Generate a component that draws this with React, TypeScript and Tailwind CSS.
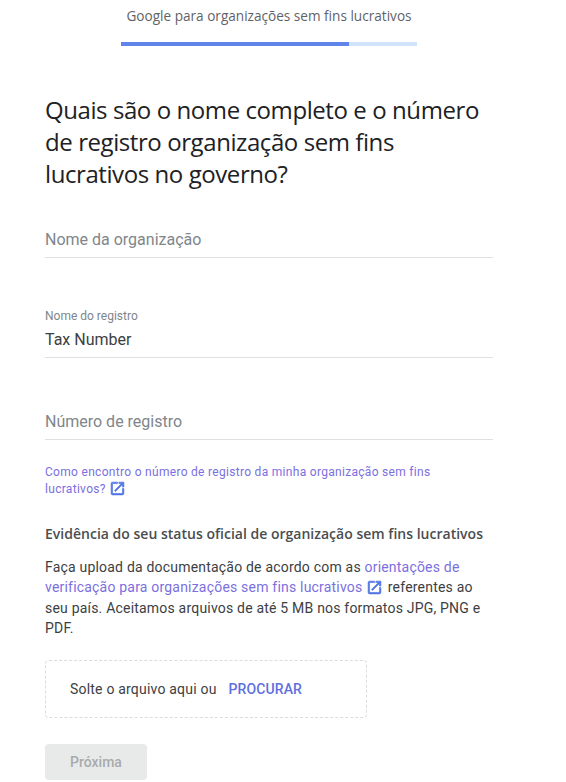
const ExternalIcon = ({ className }: { className: string }) => (
  <svg viewBox="0 0 24 24" fill="currentColor" stroke="currentColor" strokeWidth="0.9" className={className}>
    <path d="M19 19H5V5h7V3H5a2 2 0 0 0-2 2v14a2 2 0 0 0 2 2h14a2 2 0 0 0 2-2v-7h-2v7zM14 3v2h3.59l-9.83 9.83 1.41 1.41L19 6.41V10h2V3h-7z" />
  </svg>
);

function Field({ label, value }: { label: string; value?: string }) {
  return (
    <div className="h-[50px] border-b border-[#e0e0e0] flex flex-col justify-end pb-[7px]">
      {value ? (
        <>
          <span className="text-[12px] leading-[16px] text-[#80868b]">{label}</span>
          <span className="text-[16px] leading-[20px] mt-[6px] text-[#3c4043]">{value}</span>
        </>
      ) : (
        <span className="text-[16px] leading-[20px] text-[#80868b]">{label}</span>
      )}
    </div>
  );
}

export default function App() {
  return (
    <div className="w-[566px] h-[782px] overflow-hidden bg-white font-['Roboto',sans-serif]">
      <div className="w-[538px] flex flex-col items-center pt-[6px]">
        <p className="font-['Open_Sans',sans-serif] text-[13.6px] leading-[20px] text-[#5f6368]">Google para organizações sem fins lucrativos</p>
        <div className="mt-[16px] w-[296px] h-[4px] bg-[#d2e3fc] flex">
          <div className="w-[228px] bg-[#5f85eb]" />
        </div>
      </div>

      <div className="pl-[45px] w-[493px]">
        <h1 className="mt-[48px] font-['Open_Sans',sans-serif] text-[24px] leading-[32px] tracking-[-0.42px] text-[#202124] font-normal">
          Quais são o nome completo e o número de registro organização sem fins lucrativos no governo?
        </h1>

        <div className="mt-[18px]">
          <Field label="Nome da organização" />
        </div>
        <div className="mt-[50px]">
          <Field label="Nome do registro" value="Tax Number" />
        </div>
        <div className="mt-[32px]">
          <Field label="Número de registro" />
        </div>

        <p className="mt-[24px] text-[12px] leading-[16px] tracking-[0.3px] text-[#7b6fe0]">
          Como encontro o número de registro da minha organização sem fins lucrativos?{" "}
          <ExternalIcon className="inline-block w-[17px] h-[17px] text-[#4f74e3] align-[-4px]" />
        </p>

        <h2 className="mt-[27px] font-['Open_Sans',sans-serif] text-[14px] leading-[20px] font-semibold tracking-[0.01px] text-[#4a4d50]">
          Evidência do seu status oficial de organização sem fins lucrativos
        </h2>

        <p className="mt-[13px] text-[14px] leading-[20.4px] tracking-[0.2px] text-[#3c4043]">
          Faça upload da documentação de acordo com as{" "}
          <span className="text-[#7b6fe0]">orientações de verificação para organizações sem fins lucrativos</span>{" "}
          <ExternalIcon className="inline-block w-[17px] h-[17px] text-[#4f74e3] align-[-4px] mr-[1px]" /> referentes ao seu país. Aceitamos arquivos de até 5 MB nos formatos JPG, PNG e PDF.
        </p>

        <div className="mt-[21px] w-[322px] h-[58px] border border-dashed border-[#dadce0] rounded-[4px] flex items-center pl-[24px] pt-[2px] text-[14px]">
          <span className="tracking-[0.2px] text-[#3c4043]">Solte o arquivo aqui ou</span>
          <span className="ml-[12px] font-medium tracking-[0.1px] text-[#5f6fe0]">PROCURAR</span>
        </div>

        <button className="block mt-[26px] w-[102px] h-[36px] rounded-[4px] bg-[#e8eaea] pt-[2px] text-[14px] font-medium text-[#a8abad]">
          Próxima
        </button>
      </div>
    </div>
  );
}
